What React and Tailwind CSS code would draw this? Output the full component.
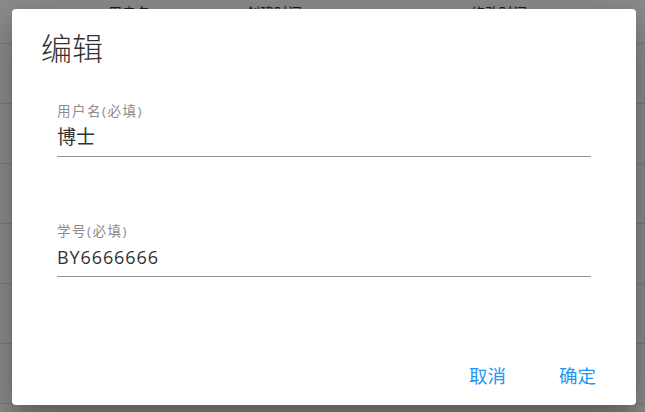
export default function App() {
  const rows = [0, 1, 2, 3, 4, 5];

  return (
    <div
      className="relative w-[645px] h-[412px] overflow-hidden bg-white"
      style={{ fontFamily: '"Open Sans", "Noto Sans CJK SC", sans-serif' }}
    >
      {/* table behind the dialog */}
      <div className="flex flex-col">
        <div className="h-[44px] border-b border-[#e0e0e0] flex text-[14px] text-[#333] leading-[20px] pt-[3px]">
          <span className="ml-[108px]">用户名</span>
          <span className="ml-[96px]">创建时间</span>
          <span className="ml-[169px]">修改时间</span>
        </div>
        {rows.map((r) => (
          <div key={r} className="h-[60px] border-b border-[#e0e0e0]" />
        ))}
      </div>

      {/* overlay */}
      <div className="absolute inset-0 bg-black/45" />

      {/* dialog */}
      <div className="absolute left-[12px] top-[9px] w-[624px] h-[396px] bg-white rounded-[4px] shadow-[0_11px_15px_-7px_rgba(0,0,0,0.2),0_24px_38px_3px_rgba(0,0,0,0.14),0_9px_46px_8px_rgba(0,0,0,0.12)] flex flex-col">
        <h2 className="pt-[18px] pl-[29px] text-[31px] leading-[42px] font-light text-[#333]">编辑</h2>

        <div className="px-[45px] flex flex-col">
          <div className="mt-[34px] border-b border-[#949494] pb-[7px] flex flex-col">
            <label className="text-[13.5px] leading-[16px] text-[#8c8c8c] tracking-[1.5px]">用户名(必填)</label>
            <div className="mt-[6px] text-[19px] leading-[24px] text-[#333]">博士</div>
          </div>
          <div className="mt-[66px] border-b border-[#949494] pb-[7px] flex flex-col">
            <label className="text-[13.5px] leading-[16px] text-[#8c8c8c] tracking-[1.5px]">学号(必填)</label>
            <div className="mt-[6px] text-[18px] leading-[24px] text-[#333] tracking-[0.9px]">BY6666666</div>
          </div>
        </div>

        <div className="mt-auto mb-[17px] flex justify-end pr-[40px] gap-[53px] text-[18.5px] leading-[24px] text-[#2196f3]">
          <button className="cursor-pointer">取消</button>
          <button className="cursor-pointer">确定</button>
        </div>
      </div>
    </div>
  );
}
